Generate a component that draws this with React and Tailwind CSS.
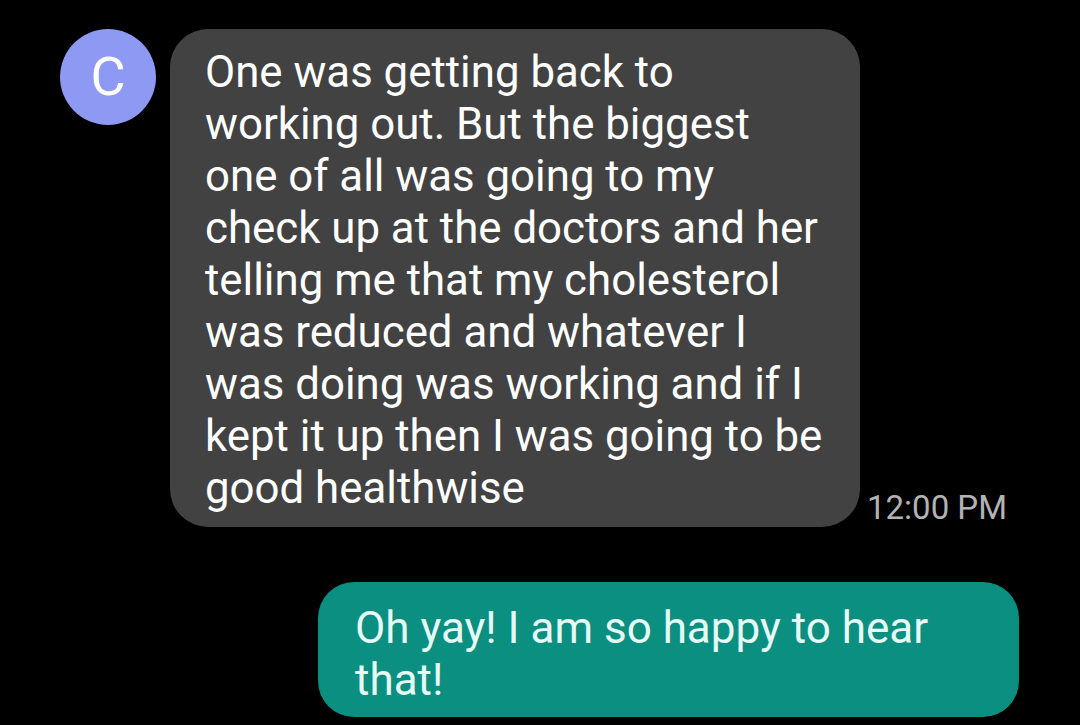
const received = [
  'One was getting back to',
  'working out. But the biggest',
  'one of all was going to my',
  'check up at the doctors and her',
  'telling me that my cholesterol',
  'was reduced and whatever I',
  'was doing was working and if I',
  'kept it up then I was going to be',
  'good healthwise',
]

const sent = ['Oh yay! I am so happy to hear', 'that!']

function Lines({ lines }) {
  return lines.map((l, i) => (
    <span key={i} className="block whitespace-nowrap">
      {l}
    </span>
  ))
}

export default function App() {
  return (
    <div
      className="w-[1080px] h-[725px] bg-black overflow-hidden"
      style={{ fontFamily: 'Roboto, "Noto Sans", sans-serif' }}
    >
      <div className="flex items-start pt-[29px] pl-[60px]">
        <div className="w-[96px] h-[96px] rounded-full bg-[#8e99f3] flex items-center justify-center text-white text-[54px] leading-none shrink-0">
          C
        </div>
        <div className="ml-[14px] w-[690px] h-[498px] rounded-[38px] bg-[#424242] pl-[35px] pt-[17px] text-[43.8px] leading-[52px] text-white">
          <Lines lines={received} />
        </div>
        <div className="self-end ml-[7px] mb-[-1px] text-[33px] leading-[40px] text-[#b3b3b3]">12:00 PM</div>
      </div>
      <div className="flex justify-end pr-[61px] mt-[55px]">
        <div className="w-[701px] h-[135px] rounded-[36px] bg-[#0b8f80] pl-[37px] pt-[20px] text-[44px] leading-[52px] text-[#e6faf6]">
          <Lines lines={sent} />
        </div>
      </div>
    </div>
  )
}
